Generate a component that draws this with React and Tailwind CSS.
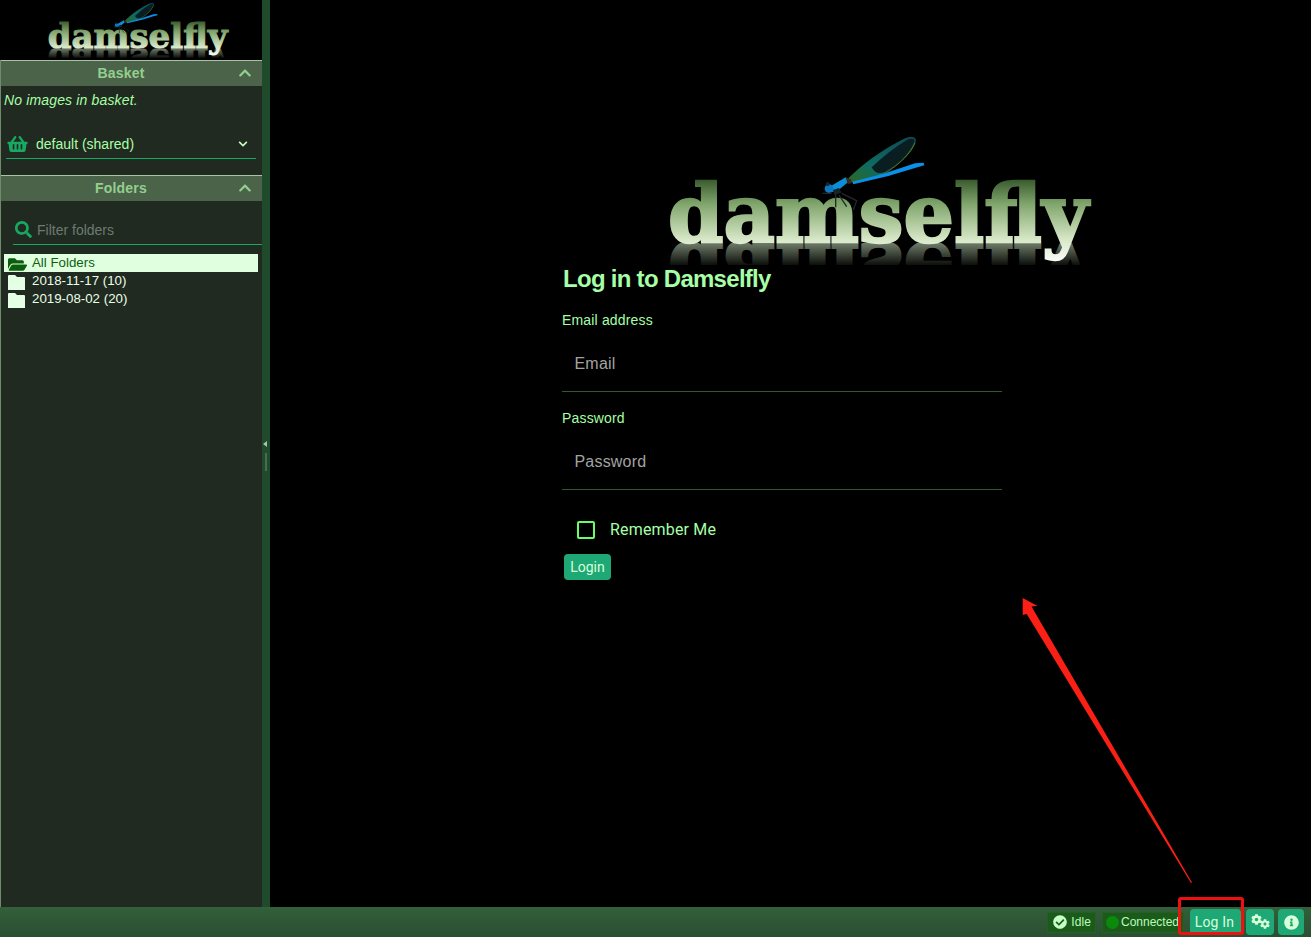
import React from 'react';
import {
    FaShoppingBasket, FaChevronUp, FaChevronDown, FaSearch, FaFolderOpen,
    FaCheckCircle, FaCog, FaInfoCircle,
} from 'react-icons/fa';

// logo: real text with a gradient, plus flipped reflection and the dragonfly drawing
function Logo({ id, className }) {
    return (
        <svg viewBox="0 0 440 140" className={className}>
            <defs>
                <linearGradient id={`${id}-text`} gradientUnits="userSpaceOnUse" x1="0" y1="48" x2="0" y2="134">
                    <stop offset="0" stopColor="#35552a" />
                    <stop offset="0.3" stopColor="#80a56c" />
                    <stop offset="0.72" stopColor="#d8e8c8" />
                    <stop offset="1" stopColor="#ffffff" />
                </linearGradient>
                <linearGradient id={`${id}-refl`} gradientUnits="userSpaceOnUse" x1="0" y1="112" x2="0" y2="90">
                    <stop offset="0" stopColor="#6f7c69" />
                    <stop offset="1" stopColor="#0c0f0b" />
                </linearGradient>
                <linearGradient id={`${id}-wing`} x1="0" y1="1" x2="1" y2="0">
                    <stop offset="0" stopColor="#2c6a20" />
                    <stop offset="0.35" stopColor="#0f6a62" />
                    <stop offset="1" stopColor="#0b4a55" />
                </linearGradient>
                <clipPath id={`${id}-clip`}>
                    <rect x="0" y="0" width="440" height="134" />
                </clipPath>
                <clipPath id={`${id}-clip-flip`}>
                    <rect x="0" y="90" width="440" height="22" />
                </clipPath>
            </defs>
            <g clipPath={`url(#${id}-clip-flip)`} transform="translate(0,225) scale(1,-1)">
                <text x="8" y="112" textLength="420" lengthAdjust="spacingAndGlyphs"
                    fill={`url(#${id}-refl)`} stroke={`url(#${id}-refl)`} strokeWidth="2.4"
                    fontFamily="'DejaVu Serif', serif" fontWeight="700" fontSize="80">damselfly</text>
            </g>
            <g clipPath={`url(#${id}-clip)`}>
                <text x="8" y="112" textLength="420" lengthAdjust="spacingAndGlyphs"
                    fill={`url(#${id}-text)`} stroke={`url(#${id}-text)`} strokeWidth="2.4"
                    fontFamily="'DejaVu Serif', serif" fontWeight="700" fontSize="80">damselfly</text>
            </g>
            <g transform="translate(155,0) scale(0.3333)">
                <path d="M100 145 C140 105 200 60 270 25 C290 18 305 20 302 35 C295 60 270 90 215 125 C180 145 130 155 105 155 Z" fill={`url(#${id}-wing)`} />
                <path d="M170 112 C200 85 240 50 280 28 C298 22 300 30 297 38 C285 65 262 95 215 123 C195 133 180 132 170 112 Z" fill="#0a1e22" />
                <path d="M300 38 C290 62 268 92 215 127 C180 145 140 153 110 155" stroke="#5f7a14" strokeWidth="3" fill="none" />
                <path d="M112 155 L210 130 L300 100 L326 98 L328 106 L300 114 L220 138 L115 163 Z" fill="#0b8fe8" />
                <path d="M48 168 L92 142 L100 156 L66 184 L50 186 Z" fill="#0a8ed6" />
                <path d="M92 142 L108 148 L110 160 L98 162 Z" fill="#3a2a2a" />
                <path d="M54 180 L72 174 L80 188 L58 194 Z" fill="#1a2226" />
                <circle cx="42" cy="176" r="13" fill="#0b78c0" />
                <circle cx="38" cy="162" r="6" fill="#16262c" />
                <g stroke="#20282a" strokeWidth="4" fill="none">
                    <path d="M50 190 L22 190" />
                    <path d="M62 190 L62 232" />
                    <path d="M72 195 L95 230" />
                    <path d="M80 190 L125 212 L115 240" />
                </g>
            </g>
        </svg>
    );
}

function SectionHeader({ title }) {
    return (
        <div className="flex items-center h-[26px] bg-[#4b6349] border-t border-[#a9c4a4] shrink-0">
            <div className="flex-1 text-center pl-[3px] text-[14px] tracking-[0.2px] font-bold text-[#93cf8f]">{title}</div>
            <FaChevronUp className="text-[#93cf8f] w-[14px] h-[14px] mr-[10px] mb-[2px]" />
        </div>
    );
}

function FolderRow({ label, selected }) {
    return (
        <div className={`flex items-center h-[18px] pl-[4px] text-[13.3px] ${selected ? 'bg-[#dfffdf] text-[#0d5f0d]' : 'text-[#e8ffe8]'}`}>
            {selected
                ? <FaFolderOpen className="w-[19px] h-[17px] text-[#0b5e0b] mt-[3px]" />
                : (
                    <svg viewBox="0 0 17 15" className="w-[17px] h-[15px] mt-[3px] shrink-0">
                        <path d="M0 1 Q0 0 1 0 H7 L9 2 H16 Q17 2 17 3 V15 H0 Z" fill="#e4ffe4" />
                    </svg>
                )}
            <span className={selected ? 'ml-[5px] leading-[18px]' : 'ml-[7px] leading-[18px]'}>{label}</span>
        </div>
    );
}

function FormField({ label, placeholder, type }) {
    return (
        <div>
            <div className="h-[20px] leading-[20px] text-[14px] tracking-[0.17px] text-[#a6ffa6]">{label}</div>
            <input
                type={type}
                placeholder={placeholder}
                className="block w-full h-[57px] mt-[5px] pl-[12.5px] pr-[12px] pt-[2px] bg-black border-b border-[#2f5a2f] text-[16px] tracking-[0.2px] text-[#a6ffa6] outline-none placeholder:text-[#a3a3a3]"
            />
        </div>
    );
}

export default function App() {
    const sans = "font-['Liberation_Sans',sans-serif]";
    const roboto = "font-['Roboto',sans-serif]";

    return (
        <div className={`relative flex flex-col h-[937px] w-[1311px] overflow-hidden bg-black ${sans}`}>
            <div className="flex flex-1 min-h-0">
                <aside className="flex flex-col w-[262px] shrink-0 bg-[#212a20] border-l border-[#6f8a6c]">
                    <div className="h-[60px] bg-black pl-[44px] shrink-0 -ml-px">
                        <Logo id="small" className="block w-[189px] h-[60px]" />
                    </div>
                    <SectionHeader title="Basket" />
                    <div className="h-[89px] shrink-0 px-[3px]">
                        <div className="pt-[4px] h-[27px] text-[14px] tracking-[0.15px] italic text-[#a6ffa6]">No images in basket.</div>
                        <div className="flex items-center h-[32px] mt-[14px] ml-[2px] mr-[3px] pl-[1px] pt-[3px] border-b border-[#17a862]">
                            <FaShoppingBasket className="w-[21px] h-[18px] text-[#17a862] mb-[1px]" />
                            <span className="ml-[8px] flex-1 text-[14px] text-[#a6ffa6]">default (shared)</span>
                            <FaChevronDown className="w-[10px] h-[10px] text-[#c6ffc6] mr-[8px]" />
                        </div>
                    </div>
                    <SectionHeader title="Folders" />
                    <div className="flex items-center h-[28px] mt-[16px] ml-[12px] border-b border-[#17a862] shrink-0">
                        <FaSearch className="w-[17px] h-[17px] text-[#17a862] ml-[2px] mb-[3px]" />
                        <span className="ml-[5px] text-[14px] text-[#6b7a72]">Filter folders</span>
                    </div>
                    <div className="mt-[9px] ml-[3px] mr-[4px]">
                        <FolderRow label="All Folders" selected />
                        <FolderRow label="2018-11-17 (10)" />
                        <FolderRow label="2019-08-02 (20)" />
                    </div>
                </aside>

                <div className="relative w-[8px] shrink-0 bg-[#1f4a2c]">
                    <div className="absolute left-[1px] top-[441px] w-0 h-0 border-y-[3px] border-y-transparent border-r-[4px] border-r-[#a9c4a4]" />
                    <div className="absolute left-[3px] top-[453px] w-[2px] h-[18px] bg-[#4a6a56]" />
                </div>

                <main className="flex-1 min-w-0 bg-black pt-[130px] pl-[292px]">
                    <div className="w-[440px]">
                        <Logo id="big" className="block w-[440px] h-[140px] ml-[98px] max-w-none" />
                        <h1 className="-mt-[5px] h-[28px] ml-[1px] leading-[28px] text-[24px] font-bold tracking-[-0.72px] text-[#a6ffa6]">Log in to Damselfly</h1>
                        <div className="mt-[17px]">
                            <FormField label="Email address" placeholder="Email" type="email" />
                        </div>
                        <div className="mt-[16px]">
                            <FormField label="Password" placeholder="Password" type="password" />
                        </div>
                        <div className={`flex items-center h-[40px] mt-[20px] pl-[15px] ${roboto}`}>
                            <div className="w-[18px] h-[18px] border-2 border-[#66ff66] rounded-[2px]" />
                            <span className="ml-[15px] text-[16px] tracking-[0.17px] text-[#a6ffa6]">Remember Me</span>
                        </div>
                        <button className={`block mt-[4px] ml-[2px] w-[47px] h-[26px] rounded-[4px] bg-[#1ea876] text-[14px] text-[#d8ffd8] ${roboto}`}>Login</button>
                    </div>
                </main>
            </div>

            <footer className="flex items-center justify-end h-[30px] shrink-0 pr-[7px] bg-gradient-to-b from-[#335f3a] to-[#2a4f32]">
                <div className="flex items-center h-[21px] pl-[5px] pr-[4px] bg-[#1c5a1c] border border-[#245f24] text-[12px] tracking-[0.1px] text-[#b6ffb6]">
                    <FaCheckCircle className="w-[14px] h-[14px] text-[#c6ffc6]" />
                    <span className="ml-[4px]">Idle</span>
                </div>
                <div className="flex items-center w-[82px] h-[21px] ml-[6px] pl-[3px] bg-[#1c5a1c] border border-[#245f24] text-[12px] text-[#b6ffb6] overflow-hidden whitespace-nowrap">
                    <div className="w-[13px] h-[13px] shrink-0 rounded-full bg-[#0a8a0a]" />
                    <span className="ml-[2px]">Connected</span>
                </div>
                <button className={`ml-[6px] w-[51px] h-[26px] pr-[2px] rounded-[4px] bg-[#1ea876] text-[14px] tracking-[0.2px] text-[#d8ffd8] ${roboto}`}>Log In</button>
                <button className="flex items-center justify-center ml-[5px] w-[28px] h-[26px] rounded-[4px] bg-[#1ea876]">
                    <FaCog className="w-[11px] h-[11px] text-[#d8ffd8] -translate-y-[3px] translate-x-[1px]" />
                    <FaCog className="w-[10px] h-[10px] text-[#d8ffd8] translate-y-[2px] -translate-x-[1px]" />
                </button>
                <button className="flex items-center justify-center ml-[4px] w-[26px] h-[26px] rounded-[4px] bg-[#1ea876]">
                    <FaInfoCircle className="w-[15px] h-[15px] text-[#d8ffd8]" />
                </button>
            </footer>

            {/* red annotations drawn on top of the screenshot */}
            <div className="absolute left-[1178px] top-[897px] w-[66px] h-[38px] border-[3px] border-[#f01010] rounded-[3px]" />
            <svg className="absolute left-0 top-0 pointer-events-none" width="1311" height="937">
                <polygon points="1022.7,598 1037.5,606 1031.5,606.5 1192,882.4 1191,883 1026.7,614 1022.7,615" fill="#fb2015" />
            </svg>
        </div>
    );
}
